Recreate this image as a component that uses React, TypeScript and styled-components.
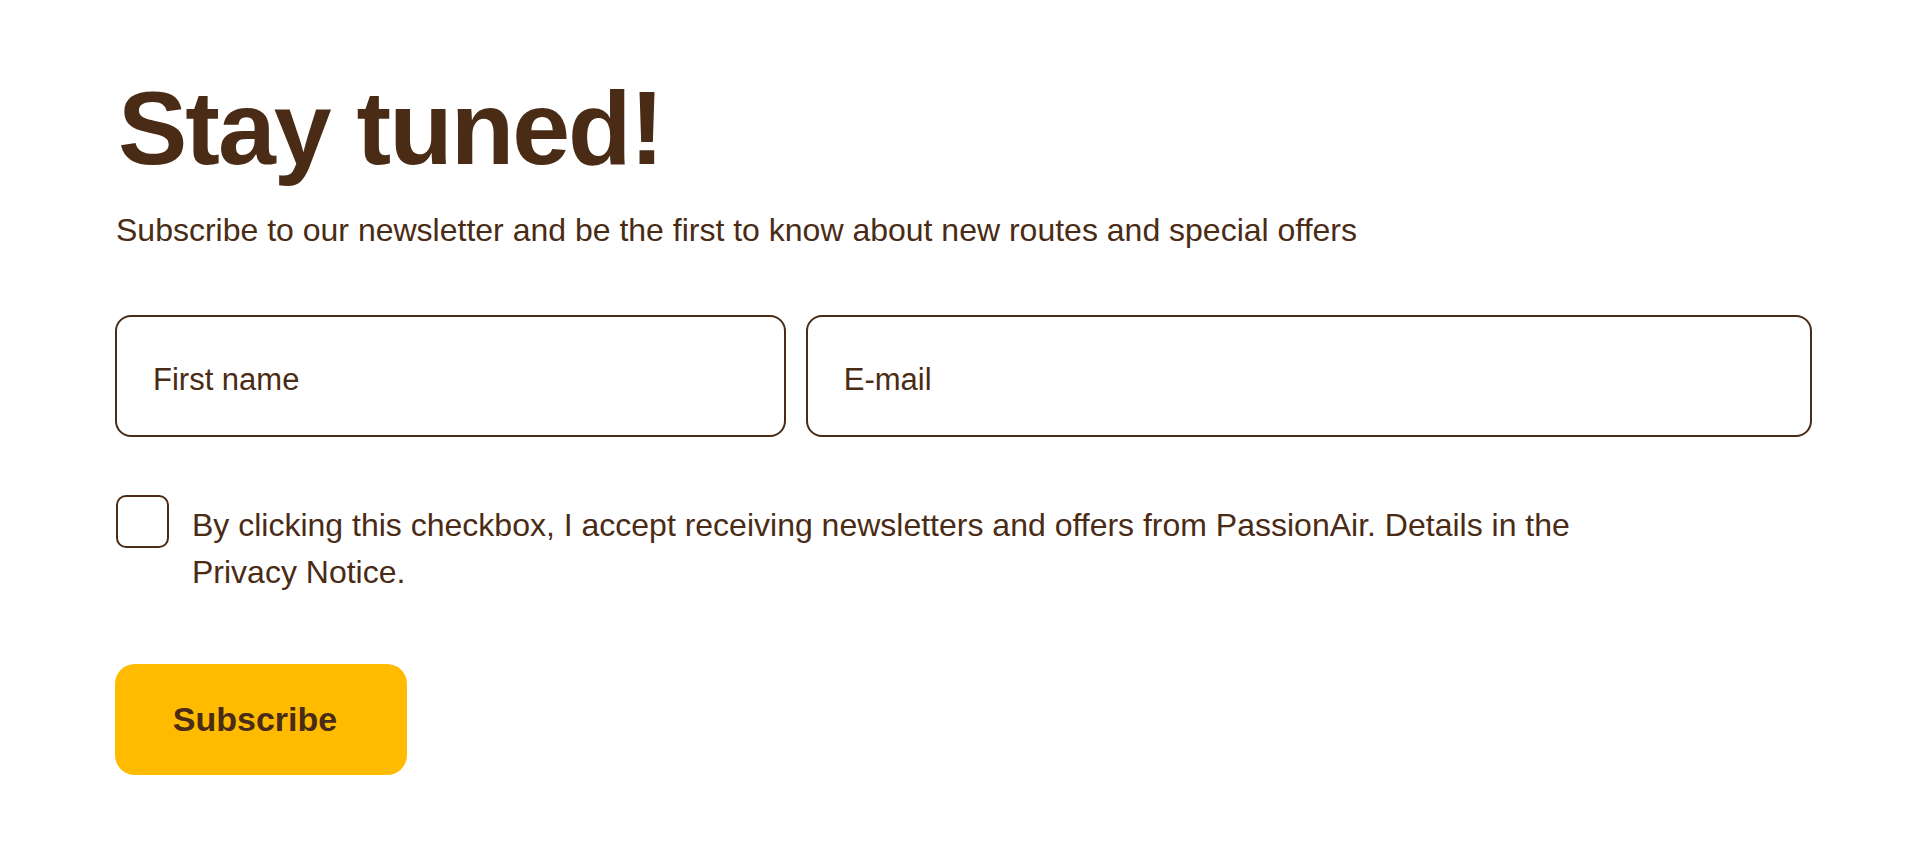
import React from "react";
import styled, { createGlobalStyle } from "styled-components";

const brown = "#4a2b15";
const yellow = "#ffbb00";

const GlobalStyle = createGlobalStyle`
  body {
    margin: 0;
    background: #ffffff;
    font-family: "Liberation Sans", Arial, Helvetica, sans-serif;
    color: ${brown};
  }
`;

const StSection = styled.section`
  display: flex;
  flex-direction: column;
  align-items: flex-start;
  padding: 76px 108px 0 115px;
`;

const StH1 = styled.h1`
  margin: 0 0 31px 3px;
  font-size: 104px;
  line-height: 1;
  font-weight: 700;
  letter-spacing: -2px;
  color: ${brown};
`;

const StLead = styled.p`
  margin: 0 0 66px 1px;
  font-size: 32px;
  line-height: 1.2;
`;

const StForm = styled.form`
  display: flex;
  flex-direction: column;
  align-items: flex-start;
  width: 100%;
`;

const StFields = styled.div`
  display: grid;
  grid-template-columns: 2fr 3fr;
  gap: 20px;
  width: 100%;
  margin-bottom: 58px;
`;

const StInput = styled.input`
  box-sizing: border-box;
  height: 122px;
  width: 100%;
  padding: 7px 36px 0;
  border: 2px solid ${brown};
  border-radius: 16px;
  background: #fff;
  font-family: inherit;
  font-size: 31px;
  color: ${brown};
  outline: none;

  &::placeholder {
    color: ${brown};
    opacity: 1;
  }
`;

const StConsent = styled.label`
  display: flex;
  align-items: flex-start;
  gap: 23px;
  margin-bottom: 68px;
  cursor: pointer;
`;

const StBox = styled.input.attrs({ type: "checkbox" })`
  appearance: none;
  flex: none;
  box-sizing: border-box;
  width: 53px;
  height: 53px;
  margin: 0 0 0 1px;
  border: 2px solid ${brown};
  border-radius: 10px;
  background: #fff;
`;

const StConsentText = styled.span`
  max-width: 1420px;
  margin-top: 7px;
  font-size: 32px;
  line-height: 47px;
`;

const StButton = styled.button`
  box-sizing: border-box;
  width: 292px;
  height: 111px;
  padding: 0 12px 0 0;
  border: none;
  border-radius: 20px;
  background: ${yellow};
  font-family: inherit;
  font-size: 34px;
  font-weight: 700;
  color: ${brown};
  cursor: pointer;
`;

export default function App() {
  return (
    <>
      <GlobalStyle />
      <StSection>
        <StH1>Stay tuned!</StH1>
        <StLead>
          Subscribe to our newsletter and be the first to know about new routes and special offers
        </StLead>
        <StForm onSubmit={(e) => e.preventDefault()}>
          <StFields>
            <StInput placeholder="First name" />
            <StInput placeholder="E-mail" type="email" />
          </StFields>
          <StConsent>
            <StBox />
            <StConsentText>
              By clicking this checkbox, I accept receiving newsletters and offers from PassionAir. Details in the
              Privacy Notice.
            </StConsentText>
          </StConsent>
          <StButton type="submit">Subscribe</StButton>
        </StForm>
      </StSection>
    </>
  );
}
